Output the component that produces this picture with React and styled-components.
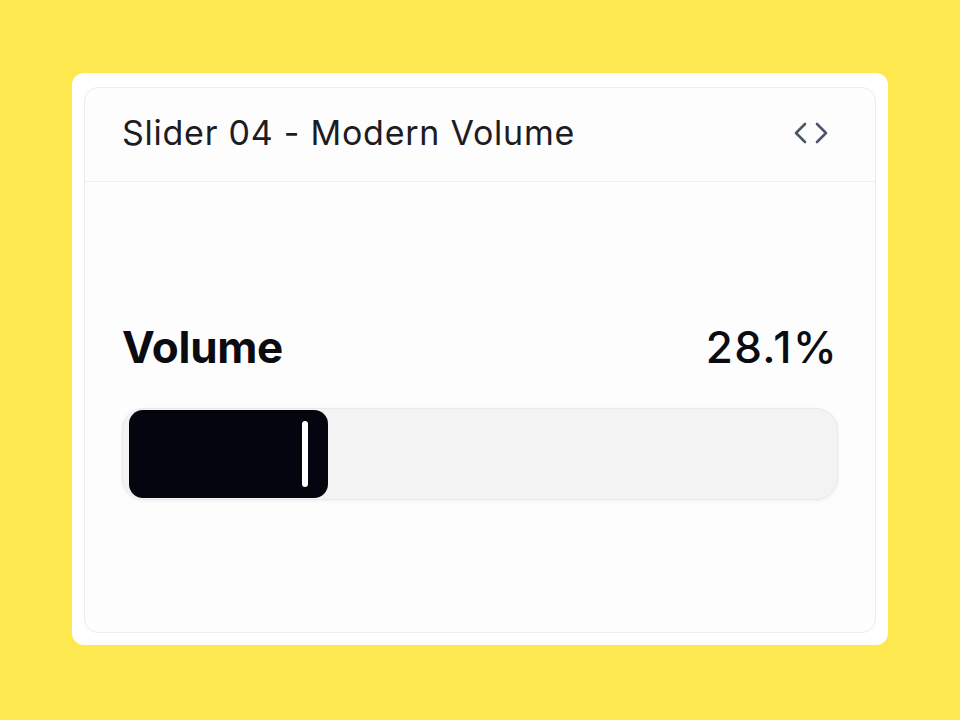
import React from "react";
import styled, { createGlobalStyle } from "styled-components";

const Global = createGlobalStyle`
  html, body { margin: 0; padding: 0; }
  body {
    background: #fee84f;
    font-family: Inter, "Noto Sans", sans-serif;
    -webkit-font-smoothing: antialiased;
  }
`;

const Page = styled.div`
  width: 960px;
  height: 720px;
  display: flex;
  align-items: center;
  justify-content: center;
`;

const Frame = styled.div`
  width: 816px;
  height: 572px;
  margin-top: -2px;
  box-sizing: border-box;
  background: #ffffff;
  border-radius: 12px;
  padding: 14px 12px 12px;
  display: flex;
`;

const Card = styled.section`
  flex: 1;
  display: flex;
  flex-direction: column;
  border: 1px solid #ececec;
  border-radius: 14px;
  background: #fdfdfd;
  overflow: hidden;
`;

const Header = styled.header`
  height: 94px;
  flex: none;
  box-sizing: border-box;
  display: flex;
  align-items: center;
  justify-content: space-between;
  padding: 0 46px 4px 37px;
  border-bottom: 1px solid #efefef;
`;

const Title = styled.h2`
  margin: 0;
  font-size: 34px;
  font-weight: 400;
  color: #1c1c22;
  letter-spacing: 0.75px;
`;

const IconButton = styled.button`
  border: 0;
  background: transparent;
  padding: 0;
  display: flex;
  color: #4b5566;
`;

const Body = styled.div`
  flex: 1;
  display: flex;
  flex-direction: column;
  justify-content: center;
  padding: 6px 37px 0;
  gap: 34px;
`;

const LabelRow = styled.div`
  display: flex;
  justify-content: space-between;
  align-items: baseline;
  color: #0b0b12;
`;

const Label = styled.span`
  font-size: 44px;
  font-weight: 700;
  letter-spacing: -0.3px;
`;

const Value = styled.span`
  font-size: 44px;
  font-weight: 500;
  letter-spacing: 1.4px;
`;

const Track = styled.div`
  height: 92px;
  box-sizing: border-box;
  background: #f3f3f4;
  border: 1px solid #e9e9ea;
  border-radius: 22px;
  box-shadow: 0 1px 4px rgba(0, 0, 0, 0.06);
  padding: 1px 6px;
  display: flex;
`;

const Fill = styled.div`
  height: 100%;
  min-width: 24px;
  background: #05050f;
  border-radius: 14px;
  display: flex;
  align-items: center;
  justify-content: flex-end;
  padding-right: 20px;
  box-sizing: border-box;
`;

const Handle = styled.span`
  width: 6px;
  height: 66px;
  border-radius: 3px;
  background: #ffffff;
`;

const CodeIcon = () => (
  <svg width="36" height="22" viewBox="0 0 36 22" fill="none" stroke="currentColor"
    strokeWidth="2.6" strokeLinecap="round" strokeLinejoin="round">
    <path d="M12 2 L3 11 L12 20" />
    <path d="M24 2 L33 11 L24 20" />
  </svg>
);

export default function App() {
  const value = 28.1;
  return (
    <>
      <Global />
      <Page>
        <Frame>
          <Card>
            <Header>
              <Title>Slider 04 - Modern Volume</Title>
              <IconButton aria-label="View code">
                <CodeIcon />
              </IconButton>
            </Header>
            <Body>
              <LabelRow>
                <Label>Volume</Label>
                <Value>{value.toFixed(1)}%</Value>
              </LabelRow>
              <Track>
                <Fill style={{ width: `calc(${value}% + 2px)` }}>
                  <Handle />
                </Fill>
              </Track>
            </Body>
          </Card>
        </Frame>
      </Page>
    </>
  );
}
